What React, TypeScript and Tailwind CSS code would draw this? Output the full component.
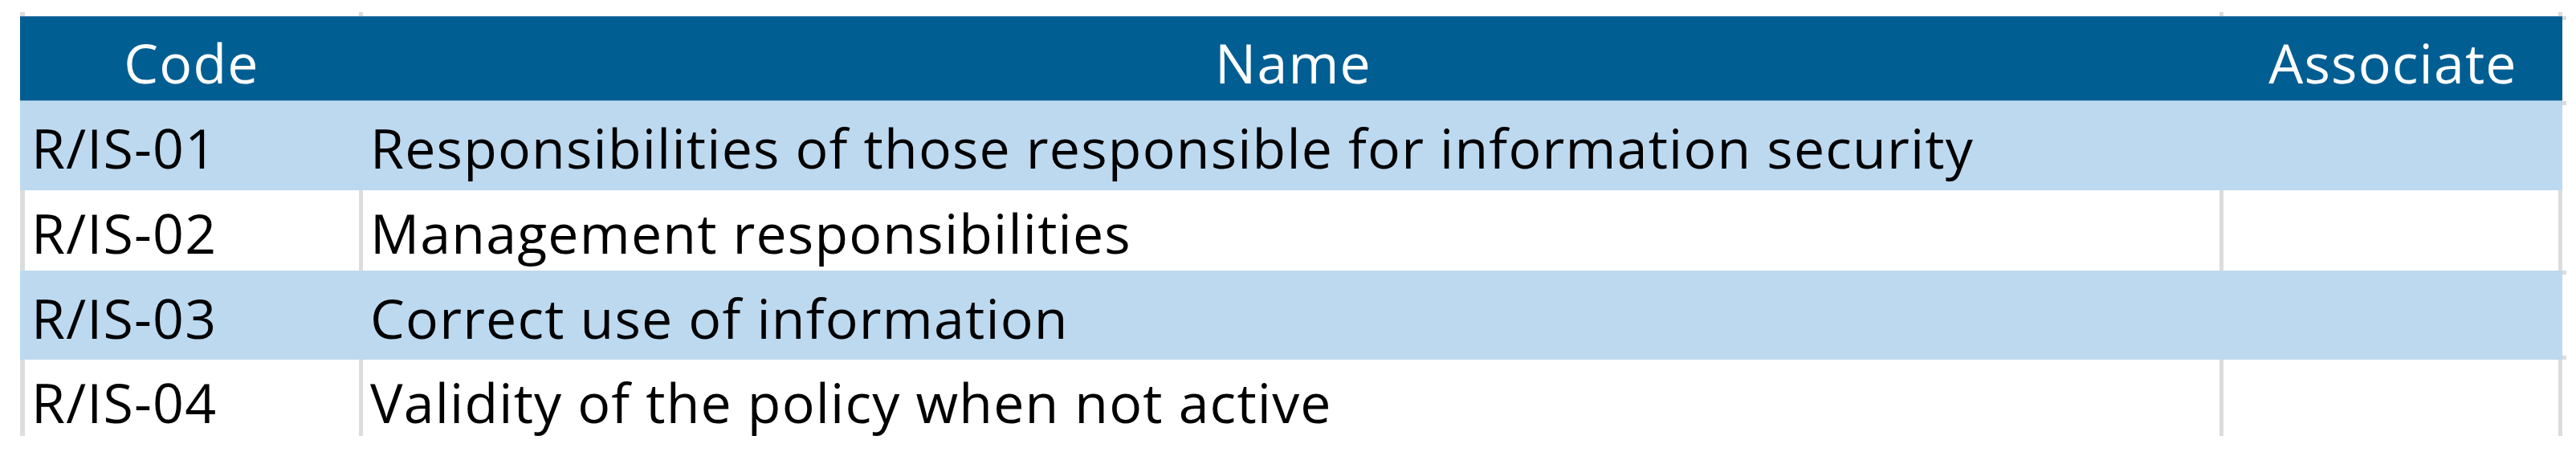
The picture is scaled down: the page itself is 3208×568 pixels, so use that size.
import React from "react";

interface Row {
  code: string;
  name: string;
  blue: boolean;
  height: string;
  pad: string;
  tickTop: boolean;
  tickBottom: boolean;
}

const rows: Row[] = [
  {
    code: "R/IS-01",
    name: "Responsibilities of those responsible for information security",
    blue: true,
    height: "h-[111px]",
    pad: "pb-[19px]",
    tickTop: true,
    tickBottom: false,
  },
  {
    code: "R/IS-02",
    name: "Management responsibilities",
    blue: false,
    height: "h-[100px]",
    pad: "pb-[13px]",
    tickTop: false,
    tickBottom: false,
  },
  {
    code: "R/IS-03",
    name: "Correct use of information",
    blue: true,
    height: "h-[111px]",
    pad: "pb-[18px]",
    tickTop: true,
    tickBottom: true,
  },
  {
    code: "R/IS-04",
    name: "Validity of the policy when not active",
    blue: false,
    height: "h-[95px]",
    pad: "pb-[8px]",
    tickTop: false,
    tickBottom: false,
  },
];

const font = { fontFamily: "'Open Sans', Lato, sans-serif" };

// little gridline stub sticking out to the right of the table
const Tick: React.FC<{ top: boolean; bottom: boolean }> = ({ top, bottom }) => (
  <div className="w-[5px] flex flex-col justify-between">
    <div className={top ? "h-[5px] bg-[#dadcdd]" : "h-[5px]"} />
    <div className={bottom ? "h-[5px] bg-[#dadcdd]" : "h-[5px]"} />
  </div>
);

const SheetRow: React.FC<{ row: Row }> = ({ row }) => {
  const bg = row.blue ? "bg-[#bdd9ef]" : "bg-white";
  const line = row.blue ? "border-[#bdd9ef]" : "border-[#dadcdd]";
  return (
    <div className="flex">
      <div className={`flex ${row.height} ${bg}`}>
        <div
          className={`w-[427px] border-l-[6px] border-r-[5px] ${line} flex items-end pl-[8px] ${row.pad}`}
        >
          <span className="text-[68px] leading-none tracking-[1.2px] text-black">{row.code}</span>
        </div>
        <div
          className={`w-[2317px] border-r-[5px] ${line} flex items-end pl-[9px] ${row.pad}`}
        >
          <span className="text-[68px] leading-none tracking-[1.2px] text-black">{row.name}</span>
        </div>
        <div className={`w-[422px] border-r-[5px] ${line}`} />
      </div>
      <Tick top={row.tickTop} bottom={row.tickBottom} />
    </div>
  );
};

export default function App() {
  return (
    <div
      className="w-[3208px] h-[568px] bg-white pl-[25px] pt-[15px] [font-variant-ligatures:none]"
      style={font}
    >
      {/* stubs above header */}
      <div className="flex h-[5px]">
        <div className="w-[427px] border-l-[6px] border-r-[5px] border-[#dadcdd]" />
        <div className="w-[2317px] border-r-[5px] border-[#dadcdd]" />
        <div className="w-[422px] border-r-[5px] border-[#dadcdd]" />
      </div>

      {/* header */}
      <div className="flex">
        <div className="flex h-[106px] bg-[#005e93] border-t border-t-[#4f86b0] border-b border-b-[#8fb6d8] text-white">
          <div className="w-[427px] flex items-end justify-center pb-[13px]">
            <span className="text-[68px] leading-none tracking-[1.2px]">Code</span>
          </div>
          <div className="w-[2317px] flex items-end justify-center pb-[13px]">
            <span className="text-[68px] leading-none tracking-[1.2px]">Name</span>
          </div>
          <div className="w-[422px] flex items-end justify-center pb-[13px]">
            <span className="text-[68px] leading-none tracking-[1.2px]">Associate</span>
          </div>
        </div>
        <Tick top={true} bottom={false} />
      </div>

      {rows.map((r) => (
        <SheetRow key={r.code} row={r} />
      ))}
    </div>
  );
}
